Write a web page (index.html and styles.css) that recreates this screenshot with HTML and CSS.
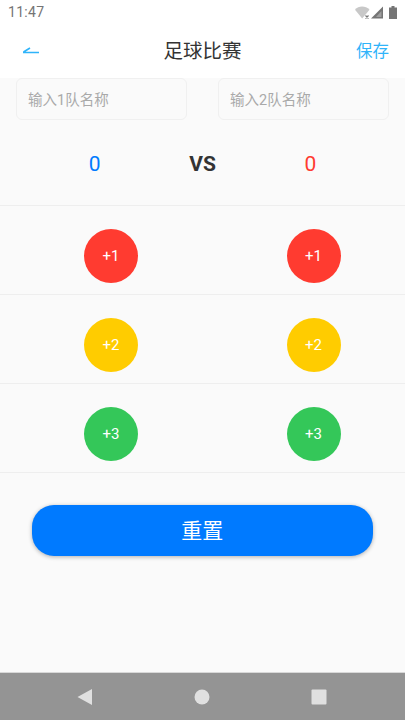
FILE: index.html
```html
<!DOCTYPE html>
<html lang="zh-CN">
<head>
    <meta charset="UTF-8">
    <meta name="viewport" content="width=device-width, initial-scale=1.0">
    <title>足球比赛</title>
    <link rel="stylesheet" href="styles.css">
</head>
<body>
    <div class="status-bar">
        <span class="time">11:47</span>
        <div class="status-icons">
            <svg class="wifi-icon" width="15" height="13" viewBox="0 0 15 13">
                <path d="M0 3.800C3.500 -0.600 10.500 -0.600 14.500 3.800L7.200 12.500Z" fill="#c8c8c8"/>
                <path d="M10.500 9.500l3 3M13.500 9.500l-3 3" stroke="#757575" stroke-width="1.200"/>
            </svg>
            <svg class="signal-icon" width="12" height="13" viewBox="0 0 12 13">
                <path d="M12 0.500V12.500H0Z" fill="#757575"/>
                <path d="M10.500 5V11H5Z" fill="#fff" opacity="0.300"/>
            </svg>
            <svg width="8" height="13" viewBox="0 0 8 13">
                <path d="M2.500 0h3v1.500H8V13H0V1.500h2.500Z" fill="#757575"/>
            </svg>
        </div>
    </div>

    <header class="nav-bar">
        <svg class="back-icon" width="17" height="8" viewBox="0 0 17 8">
            <path d="M1 6.500H17M1.500 6L8 2" fill="none" stroke="#2fb4fa" stroke-width="1.600"/>
        </svg>
        <h1 class="nav-title">足球比赛</h1>
        <a class="nav-save">保存</a>
    </header>

    <main class="content">
        <div class="team-inputs">
            <div class="team-input">输入1队名称</div>
            <div class="team-input">输入2队名称</div>
        </div>

        <div class="score-row">
            <span class="score score-blue">0</span>
            <span class="versus">VS</span>
            <span class="score score-red">0</span>
        </div>

        <div class="point-row">
            <button class="point-btn btn-red">+1</button>
            <button class="point-btn btn-red">+1</button>
        </div>
        <div class="point-row">
            <button class="point-btn btn-yellow">+2</button>
            <button class="point-btn btn-yellow">+2</button>
        </div>
        <div class="point-row">
            <button class="point-btn btn-green">+3</button>
            <button class="point-btn btn-green">+3</button>
        </div>

        <button class="reset-btn">重置</button>
    </main>

    <nav class="system-nav">
        <svg width="16" height="16" viewBox="0 0 16 16"><path d="M15 0V16L0.500 8Z" fill="#e0e0e0"/></svg>
        <svg width="16" height="16" viewBox="0 0 16 16"><circle cx="8" cy="8" r="7.500" fill="#e0e0e0"/></svg>
        <svg width="16" height="16" viewBox="0 0 16 16"><rect x="0.500" y="0.500" width="15" height="15" rx="1" fill="#e0e0e0"/></svg>
    </nav>
</body>
</html>
```

FILE: styles.css
```css
* {
    box-sizing: border-box;
}

body {
    margin: 0;
    width: 405px;
    height: 720px;
    overflow: hidden;
    display: flex;
    flex-direction: column;
    background-color: #fafafa;
    font-family: Roboto, "Noto Sans CJK SC", sans-serif;
}

.status-bar {
    height: 24px;
    flex-shrink: 0;
    display: flex;
    align-items: center;
    justify-content: space-between;
    padding: 0 8px;
    background-color: #fff;
}

.time {
    font-size: 14px;
    letter-spacing: 0.3px;
    color: #757575;
}

.status-icons {
    display: flex;
    align-items: center;
}

.wifi-icon {
    margin-right: 1px;
}

.signal-icon {
    margin-right: 6px;
}

.nav-bar {
    height: 54px;
    flex-shrink: 0;
    display: flex;
    align-items: center;
    justify-content: center;
    position: relative;
    padding-bottom: 3px;
    background-color: #fff;
}

.back-icon {
    position: absolute;
    left: 22px;
    top: 22px;
}

.nav-title {
    margin: 0;
    font-size: 19.500px;
    font-weight: 400;
    color: #333;
}

.nav-save {
    position: absolute;
    right: 16px;
    top: 14px;
    font-size: 16.500px;
    color: #2fb4fa;
}

.content {
    flex-grow: 1;
    display: flex;
    flex-direction: column;
}

.team-inputs {
    display: flex;
    justify-content: space-between;
    padding: 0 16.500px 0 16px;
}

.team-input {
    width: 170.500px;
    height: 42px;
    padding: 0 0 2px 11px;
    display: flex;
    align-items: center;
    font-size: 14.500px;
    color: #a9a9a9;
    border: 1px solid #f0f0f0;
    border-radius: 6px;
}

.score-row {
    height: 86px;
    display: grid;
    grid-template-columns: 1fr auto 1fr;
    align-items: center;
    justify-items: center;
    padding-top: 2px;
    border-bottom: 1px solid #eee;
}

.score {
    font-size: 21px;
}

.score-blue {
    color: #007aff;
}

.score-red {
    color: #ff3b30;
}

.versus {
    font-size: 21px;
    font-weight: 700;
    color: #333;
}

.point-row {
    height: 89px;
    display: flex;
    align-items: center;
    justify-content: space-between;
    padding: 12px 64.500px 0 84px;
    border-bottom: 1px solid #eee;
}

.point-btn {
    width: 54px;
    height: 54px;
    padding: 0;
    border: none;
    border-radius: 50%;
    font-family: inherit;
    font-size: 15px;
    color: #fff;
}

.btn-red {
    background-color: #ff3b30;
}

.btn-yellow {
    background-color: #ffcc00;
}

.btn-green {
    background-color: #34c759;
}

.reset-btn {
    height: 51px;
    margin: 32px 32.500px 0 32px;
    padding: 0 0 3px;
    border: none;
    border-radius: 22px;
    background-color: #007aff;
    box-shadow: 0 1px 4px rgba(0, 0, 0, 0.3);
    font-family: inherit;
    font-size: 21px;
    color: #fff;
}

.system-nav {
    height: 48px;
    flex-shrink: 0;
    display: flex;
    align-items: center;
    justify-content: space-between;
    padding: 0 78px 0 77px;
    background-color: #949494;
    border-top: 1px solid #d8d8d8;
}
```
